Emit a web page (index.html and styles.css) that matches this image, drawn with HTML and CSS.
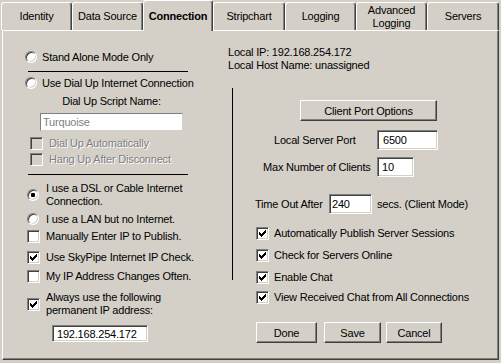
FILE: index.html
```html
<!DOCTYPE html>
<html>
<head>
<meta charset="utf-8">
<title>Connection</title>
<link rel="stylesheet" href="styles.css">
</head>
<body>
<div class="tabs">
  <div class="tab w71">Identity</div>
  <div class="tab w71">Data Source</div>
  <div class="tab sel">Connection</div>
  <div class="tab w72">Stripchart</div>
  <div class="tab w71">Logging</div>
  <div class="tab w71">Advanced<br>Logging</div>
  <div class="tab w72">Servers</div>
</div>
<div class="panel">
  <div class="left">
    <div class="row r-stand"><span class="radio"></span><span class="lbl l5">Stand Alone Mode Only</span></div>
    <div class="sep s1"></div>
    <div class="row r-dial"><span class="radio"></span><span class="lbl l5">Use Dial Up Internet Connection</span></div>
    <div class="script-name">Dial Up Script Name:</div>
    <div class="field dis f-script">Turquoise</div>
    <div class="row r-auto"><span class="check dis"></span><span class="lbl l6 distext">Dial Up Automatically</span></div>
    <div class="row r-hang"><span class="check dis"></span><span class="lbl l6 distext">Hang Up After Disconnect</span></div>
    <div class="sep s2"></div>
    <div class="row r-dsl"><span class="radio on"><span class="dot"></span></span><span class="lbl l7 two">I use a DSL or Cable Internet<br>Connection.</span></div>
    <div class="row r-lan"><span class="radio"></span><span class="lbl l7">I use a LAN but no Internet.</span></div>
    <div class="row r-man"><span class="check"></span><span class="lbl l6">Manually Enter IP to Publish.</span></div>
    <div class="row r-sky"><span class="check"><svg class="tick" width="9" height="9" viewBox="0 0 9 9"><path d="M7 1h1v1H7z M6 2h2v1H6z M1 3h1v1H1z M5 3h3v1H5z M1 4h2v1H1z M4 4h3v1H4z M1 5h5v1H1z M2 6h3v1H2z M3 7h1v1H3z"/></svg></span><span class="lbl l6">Use SkyPipe Internet IP Check.</span></div>
    <div class="row r-myip"><span class="check"></span><span class="lbl l6">My IP Address Changes Often.</span></div>
    <div class="row r-always"><span class="check"><svg class="tick" width="9" height="9" viewBox="0 0 9 9"><path d="M7 1h1v1H7z M6 2h2v1H6z M1 3h1v1H1z M5 3h3v1H5z M1 4h2v1H1z M4 4h3v1H4z M1 5h5v1H1z M2 6h3v1H2z M3 7h1v1H3z"/></svg></span><span class="lbl l6 two">Always use the following<br>permanent IP address:</span></div>
    <div class="field f-ip">192.168.254.172</div>
  </div>
  <div class="right">
    <div class="info">Local IP: 192.168.254.172<br>Local Host Name: unassigned</div>
    <div class="grp">
      <div class="vline"></div>
      <div class="gcontent">
        <div class="btn btn-cpo">Client Port Options</div>
        <div class="row r-port"><span class="flabel fl-port">Local Server Port</span><span class="field in-port">6500</span></div>
        <div class="row r-max"><span class="flabel fl-max">Max Number of Clients</span><span class="field in-max">10</span></div>
        <div class="row r-time"><span class="flabel fl-time">Time Out After</span><span class="field in-time">240</span><span class="secs">secs. (Client Mode)</span></div>
        <div class="row rc c1"><span class="check"><svg class="tick" width="9" height="9" viewBox="0 0 9 9"><path d="M7 1h1v1H7z M6 2h2v1H6z M1 3h1v1H1z M5 3h3v1H5z M1 4h2v1H1z M4 4h3v1H4z M1 5h5v1H1z M2 6h3v1H2z M3 7h1v1H3z"/></svg></span><span class="lbl l5">Automatically Publish Server Sessions</span></div>
        <div class="row rc c2"><span class="check"><svg class="tick" width="9" height="9" viewBox="0 0 9 9"><path d="M7 1h1v1H7z M6 2h2v1H6z M1 3h1v1H1z M5 3h3v1H5z M1 4h2v1H1z M4 4h3v1H4z M1 5h5v1H1z M2 6h3v1H2z M3 7h1v1H3z"/></svg></span><span class="lbl l5">Check for Servers Online</span></div>
        <div class="row rc c3"><span class="check"><svg class="tick" width="9" height="9" viewBox="0 0 9 9"><path d="M7 1h1v1H7z M6 2h2v1H6z M1 3h1v1H1z M5 3h3v1H5z M1 4h2v1H1z M4 4h3v1H4z M1 5h5v1H1z M2 6h3v1H2z M3 7h1v1H3z"/></svg></span><span class="lbl l5">Enable Chat</span></div>
        <div class="row rc c4"><span class="check"><svg class="tick" width="9" height="9" viewBox="0 0 9 9"><path d="M7 1h1v1H7z M6 2h2v1H6z M1 3h1v1H1z M5 3h3v1H5z M1 4h2v1H1z M4 4h3v1H4z M1 5h5v1H1z M2 6h3v1H2z M3 7h1v1H3z"/></svg></span><span class="lbl l5">View Received Chat from All Connections</span></div>
        <div class="btns">
          <div class="btn b-done">Done</div>
          <div class="btn b-save">Save</div>
          <div class="btn b-cancel">Cancel</div>
        </div>
      </div>
    </div>
  </div>
</div>
</body>
</html>
```

FILE: styles.css
```css
* { box-sizing: border-box; }
html, body { margin: 0; padding: 0; }
body {
  background: #d4d0c8;
  font-family: "Liberation Sans", Arial, sans-serif;
  font-size: 11px;
  letter-spacing: -0.2px;
  color: #000;
  width: 501px;
  height: 363px;
  overflow: hidden;
}

/* tabs */
.tabs { display: flex; align-items: flex-end; height: 30px; padding-left: 1px; }
.tab {
  height: 28px;
  display: flex; align-items: center; justify-content: center;
  text-align: center; line-height: 13px;
  border-top: 1px solid #fff; border-left: 1px solid #fff; border-right: 1px solid #404040;
  box-shadow: inset -1px 0 #808080;
  border-radius: 3px 3px 0 0;
  background: #d4d0c8;
}
.w71 { width: 71px; }
.w72 { width: 72px; }
.tab.sel {
  width: 70px; height: 31px; margin-bottom: -1px;
  position: relative; z-index: 1;
  font-weight: bold;
}

/* panel */
.panel {
  margin-left: 2px; width: 497px; height: 330px;
  border-top: 1px solid #fff; border-left: 1px solid #fff;
  border-right: 1px solid #404040; border-bottom: 1px solid #404040;
  box-shadow: inset -1px -1px #808080;
  display: flex;
}
.left { width: 212px; display: flex; flex-direction: column; }
.right { flex: 1; display: flex; flex-direction: column; }

.row { display: flex; align-items: center; white-space: nowrap; }
.lbl { line-height: 13px; }
.l5 { margin-left: 5px; }
.l6 { margin-left: 6px; }
.l7 { margin-left: 7px; }
.distext { color: #808080; text-shadow: 1px 1px 0 #fff; }

/* controls */
.radio {
  width: 12px; height: 12px; flex: none;
  border-radius: 50%;
  border: 1px solid; border-color: #808080 #fff #fff #808080;
  box-shadow: inset 1px 1px #404040, inset -1px -1px #d4d0c8;
  background: #fff;
  display: flex; align-items: center; justify-content: center;
}
.dot { width: 4px; height: 4px; border-radius: 1px; background: #000; }
.check {
  width: 13px; height: 13px; flex: none;
  border: 1px solid; border-color: #808080 #fff #fff #808080;
  box-shadow: inset 1px 1px #404040, inset -1px -1px #d4d0c8;
  background: #fff;
  padding: 1px;
  display: flex;
}
.check.dis { background: #d4d0c8; }
.tick { display: block; shape-rendering: crispEdges; fill: #000; }

.field {
  background: #fff;
  border: 1px solid; border-color: #808080 #fff #fff #808080;
  box-shadow: inset 1px 1px #404040, inset -1px -1px #d4d0c8;
  padding-left: 3px;
  display: flex; align-items: center;
  white-space: nowrap; flex: none;
}
.field.dis { box-shadow: none; border-color: #808080 #d4d0c8 #d4d0c8 #808080; color: #808080; padding-left: 2px; }

.btn {
  background: #d4d0c8;
  border: 1px solid; border-color: #fff #404040 #404040 #fff;
  box-shadow: inset -1px -1px #808080;
  display: flex; align-items: center; justify-content: center;
  height: 21px; white-space: nowrap;
}

.sep { height: 1px; background: #000; width: 160px; margin-left: 25px; }

/* left column placement */
.r-stand { margin-top: 19px; height: 14px; margin-left: 22px; }
.s1 { margin-top: 7px; }
.r-dial { margin-top: 4px; height: 14px; margin-left: 22px; }
.script-name { margin-top: 4px; height: 14px; line-height: 14px; margin-left: 37px; width: 143px; text-align: center; }
.f-script { margin-top: 5px; margin-left: 37px; width: 143px; height: 18px; }
.r-auto { margin-top: 6px; height: 13px; margin-left: 27px; }
.r-hang { margin-top: 3px; height: 13px; margin-left: 27px; }
.s2 { margin-top: 8px; }
.r-dsl { margin-top: 7px; height: 26px; margin-left: 24px; }
.r-lan { margin-top: 4px; height: 14px; margin-left: 24px; }
.r-man { margin-top: 4px; height: 13px; margin-left: 24px; }
.r-sky { margin-top: 8px; height: 13px; margin-left: 24px; }
.r-myip { margin-top: 6px; height: 13px; margin-left: 24px; }
.r-always { margin-top: 8px; height: 26px; margin-left: 24px; }
.f-ip { margin-top: 8px; margin-left: 49px; width: 96px; height: 17px; padding-left: 4px; }

/* right column placement */
.info { margin-top: 15px; margin-left: 13px; line-height: 13px; }
.grp { display: flex; margin-top: 16px; }
.vline { margin-left: 17px; width: 1px; height: 192px; background: #000; flex: none; }
.gcontent { display: flex; flex-direction: column; }
.btn-cpo { margin-top: 12px; margin-left: 67px; width: 137px; }
.flabel { flex: none; }
.r-port { margin-top: 9px; height: 20px; }
.fl-port { margin-left: 41px; width: 103px; }
.in-port { width: 61px; height: 20px; padding-left: 5px; }
.r-max { margin-top: 7px; height: 20px; }
.fl-max { margin-left: 30px; width: 114px; }
.in-max { width: 37px; height: 20px; padding-left: 4px; }
.r-time { margin-top: 17px; height: 20px; }
.fl-time { margin-left: 22px; width: 74px; }
.in-time { width: 43px; height: 20px; padding-left: 2px; }
.secs { margin-left: 5px; }
.rc { margin-left: 23px; height: 13px; }
.c1 { margin-top: 13px; }
.c2 { margin-top: 9px; }
.c3 { margin-top: 9px; }
.c4 { margin-top: 7px; }
.btns { display: flex; margin-top: 18px; margin-left: 23px; }
.b-done { width: 61px; }
.b-save { width: 57px; margin-left: 7px; }
.b-cancel { width: 56px; margin-left: 5px; }
```
